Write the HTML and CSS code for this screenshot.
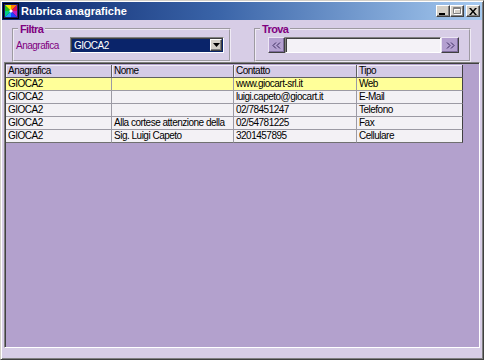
FILE: index.html
```html
<!DOCTYPE html>
<html lang="it">
<head>
<meta charset="utf-8">
<title>Rubrica anagrafiche</title>
<link rel="stylesheet" href="styles.css">
</head>
<body>
<div class="window">
  <div class="titlebar">
    <svg class="appicon" width="16" height="16" viewBox="0 0 16 16">
      <rect x="0.5" y="0.5" width="15" height="15" fill="#1a1a6a" stroke="#000"/>
      <polygon points="2,2 8,8 2,8" fill="#20c020"/>
      <polygon points="2,2 8,2 8,8" fill="#f0f000"/>
      <polygon points="8,2 14,2 8,8" fill="#ff8000"/>
      <polygon points="14,2 14,8 8,8" fill="#e01060"/>
      <polygon points="14,8 14,14 8,8" fill="#c020c0"/>
      <polygon points="14,14 8,14 8,8" fill="#2040ff"/>
      <polygon points="8,14 2,14 8,8" fill="#20a0ff"/>
      <polygon points="2,14 2,8 8,8" fill="#00d080"/>
      <circle cx="8" cy="8" r="1.6" fill="#fff"/>
    </svg>
    <span class="title">Rubrica anagrafiche</span>
    <div class="wctrls">
      <span class="wbtn">
        <svg width="8" height="7" viewBox="0 0 8 7"><rect x="0" y="5" width="6" height="2" fill="#000"/></svg>
      </span>
      <span class="wbtn">
        <svg width="9" height="8" viewBox="0 0 9 8"><path d="M1.5 2.5h7v5h-7z" fill="none" stroke="#fff"/><path d="M0.5 0.5h7v6h-7z M0.5 1.5h7" fill="none" stroke="#808080"/></svg>
      </span>
      <span class="wbtn close">
        <svg width="8" height="7" viewBox="0 0 8 7"><path d="M0 0h2l2 2.5 2-2.5h2l-3 3.5 3 3.5h-2l-2-2.5-2 2.5h-2l3-3.5z" fill="#000"/></svg>
      </span>
    </div>
  </div>

  <div class="toparea">
    <fieldset class="group g-filtra">
      <legend>Filtra</legend>
      <div class="row">
        <span class="lbl">Anagrafica</span>
        <div class="combo">
          <span class="combo-text">GIOCA2</span>
          <span class="combo-btn">
            <svg width="7" height="4" viewBox="0 0 7 4"><polygon points="0,0 7,0 3.5,4" fill="#000"/></svg>
          </span>
        </div>
      </div>
    </fieldset>
    <fieldset class="group g-trova">
      <legend>Trova</legend>
      <div class="row trova-row">
        <span class="btn3d prev">
          <svg width="9" height="7" viewBox="0 0 9 7"><path d="M4 0.5L1 3.5l3 3M8 0.5L5 3.5l3 3" fill="none" stroke="#38285c" stroke-width="1"/></svg>
        </span>
        <div class="field"></div>
        <span class="btn3d next">
          <svg width="9" height="7" viewBox="0 0 9 7"><path d="M1 0.5L4 3.5l-3 3M5 0.5L8 3.5l-3 3" fill="none" stroke="#38285c" stroke-width="1"/></svg>
        </span>
      </div>
    </fieldset>
  </div>

  <div class="panel">
    <div class="grid">
      <div class="hd">Anagrafica</div>
      <div class="hd">Nome</div>
      <div class="hd">Contatto</div>
      <div class="hd">Tipo</div>

      <div class="c sel">GIOCA2</div>
      <div class="c sel"></div>
      <div class="c sel">www.giocart-srl.it</div>
      <div class="c sel">Web</div>

      <div class="c">GIOCA2</div>
      <div class="c"></div>
      <div class="c">luigi.capeto@giocart.it</div>
      <div class="c">E-Mail</div>

      <div class="c">GIOCA2</div>
      <div class="c"></div>
      <div class="c">02/78451247</div>
      <div class="c">Telefono</div>

      <div class="c">GIOCA2</div>
      <div class="c">Alla cortese attenzione della</div>
      <div class="c">02/54781225</div>
      <div class="c">Fax</div>

      <div class="c">GIOCA2</div>
      <div class="c">Sig. Luigi Capeto</div>
      <div class="c">3201457895</div>
      <div class="c">Cellulare</div>
    </div>
  </div>

  <div class="status"></div>
</div>
</body>
</html>
```

FILE: styles.css
```css
* {
  box-sizing: border-box;
}

html, body {
  margin: 0;
  padding: 0;
  background: #d7cde6;
}

body {
  font-family: "Liberation Sans", Arial, sans-serif;
  font-size: 10px;
  letter-spacing: -0.5px;
  color: #000;
}

.window {
  width: 484px;
  height: 360px;
  display: flex;
  flex-direction: column;
  background: #d7cde6;
  border: 1px solid;
  border-color: #d4d0c8 #404040 #404040 #d4d0c8;
  box-shadow: inset 1px 1px 0 #fff, inset -1px -1px 0 #808080;
  padding: 1px;
}

/* Title bar */
.titlebar {
  height: 18px;
  flex: none;
  display: flex;
  align-items: center;
  padding: 0 2px 0 1px;
  background: linear-gradient(90deg, #0a246a 0%, #3a64a8 45%, #a6caf0 100%);
}

.appicon {
  flex: none;
  display: block;
}

.title {
  flex: 1;
  margin-left: 2px;
  color: #fff;
  font: bold 11px "Liberation Sans", Arial, sans-serif;
  letter-spacing: 0;
  white-space: nowrap;
}

.wctrls {
  display: flex;
  align-items: center;
}

.wbtn {
  width: 14px;
  height: 12px;
  display: flex;
  align-items: center;
  justify-content: center;
  background: #d4d0c8;
  border: 1px solid;
  border-color: #fff #404040 #404040 #fff;
  box-shadow: inset -1px -1px 0 #808080;
}

.wbtn svg {
  display: block;
}

.wbtn.close {
  margin-left: 2px;
}

/* Top area with group boxes */
.toparea {
  height: 42px;
  flex: none;
  display: flex;
  gap: 23px;
  padding: 3px 0 0 10px;
}

.group {
  margin: 0;
  min-width: 0;
  padding: 2px 5px 4px 2px;
  border: 2px groove #efeaf5;
}

.group legend {
  margin-left: 2px;
  padding: 0 2px;
  line-height: 11px;
  font: bold 11px "Liberation Sans", Arial, sans-serif;
  letter-spacing: -0.6px;
  color: #800080;
}

.g-filtra {
  width: 219px;
}

.g-trova {
  width: 217px;
}

.row {
  display: flex;
  align-items: center;
  height: 16px;
}

.lbl {
  color: #800080;
  white-space: nowrap;
}

.combo {
  margin-left: auto;
  width: 154px;
  height: 16px;
  display: flex;
  align-items: center;
  background: #0a246a;
  border: 1px solid;
  border-color: #808080 #fff #fff #808080;
  box-shadow: inset 1px 1px 0 #404040;
  padding: 0 1px 0 2px;
}

.combo-text {
  flex: 1;
  color: #fff;
  padding-left: 1px;
}

.combo-btn {
  width: 12px;
  height: 12px;
  display: flex;
  align-items: center;
  justify-content: center;
  background: #d4d0c8;
  border: 1px solid;
  border-color: #fff #404040 #404040 #fff;
  box-shadow: inset -1px -1px 0 #808080;
}

.combo-btn svg {
  display: block;
}

.trova-row {
  margin-left: 10px;
}

.btn3d {
  height: 16px;
  display: flex;
  align-items: center;
  justify-content: center;
  background: #b4a0d0;
  border: 1px solid;
  border-color: #ece6f4 #404040 #404040 #ece6f4;
  box-shadow: inset -1px -1px 0 #7e6c9c;
}

.btn3d.prev {
  width: 17px;
}

.btn3d.next {
  width: 18px;
}

.btn3d svg {
  display: block;
}

.field {
  width: 156px;
  height: 16px;
  background: #f4f2f7;
  border: 1px solid;
  border-color: #808080 #fff #fff #808080;
  box-shadow: inset 1px 1px 0 #404040;
}

/* Grid panel */
.panel {
  flex: 1;
  margin: 0 2px;
  background: #b3a1cd;
  border: 1px solid;
  border-color: #808080 #fff #fff #808080;
  box-shadow: inset 1px 1px 0 #404040;
  padding: 2px 0 0 1px;
}

.grid {
  display: grid;
  grid-template-columns: 106px 122px 123px 106px;
  grid-auto-rows: 13px;
  width: 457px;
}

.hd,
.c {
  padding-left: 2px;
  line-height: 12px;
  white-space: nowrap;
  overflow: hidden;
}

.hd {
  background: #d5cbe6;
  border-right: 1px solid #606060;
  border-bottom: 1px solid #606060;
  box-shadow: inset 1px 1px 0 #f2eef8;
}

.c {
  background: #f3f1f5;
  border-right: 1px solid #9c9aa4;
  border-bottom: 1px solid #9c9aa4;
}

.c.sel {
  background: #ffff99;
}

.grid > :nth-child(4n) {
  border-right-color: #404040;
}

.grid > :nth-last-child(-n+4) {
  border-bottom-color: #707070;
}

.status {
  height: 10px;
  flex: none;
  background: #d7cde6;
}
```
